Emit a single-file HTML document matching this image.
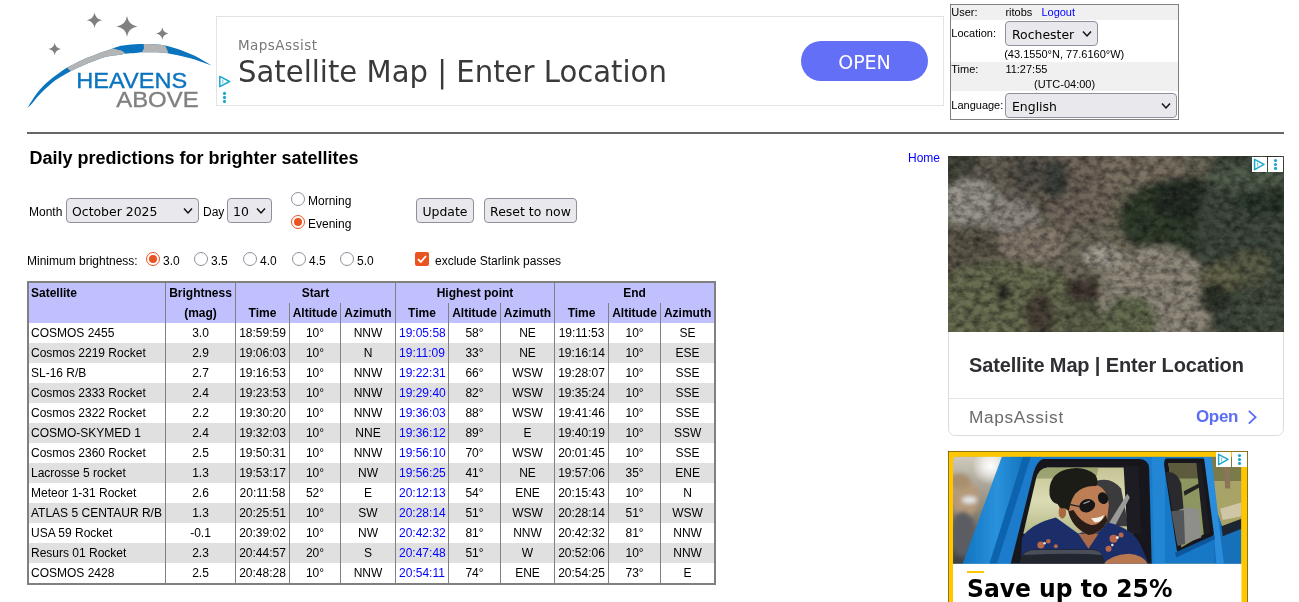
<!DOCTYPE html>
<html><head><meta charset="utf-8"><title>Heavens-Above</title>
<style>
html,body{margin:0;padding:0;background:#fff;}
body{width:1299px;height:602px;overflow:hidden;position:relative;font-family:"Liberation Sans",Arial,sans-serif;font-size:12px;color:#000;}
.abs{position:absolute;}
a{color:#0000ff;text-decoration:none;}
.dv{font-family:"DejaVu Sans","Liberation Sans",sans-serif;}
/* fake select / button */
.sel{position:absolute;box-sizing:border-box;border:1px solid #8f8f9d;border-radius:4px;background:#e9e9ed;font-family:"DejaVu Sans",sans-serif;font-size:12.45px;color:#000;padding:0 0 0 5px;overflow:hidden;white-space:nowrap;}
.sel svg{position:absolute;right:5px;top:50%;margin-top:-4px;}
.btn{position:absolute;box-sizing:border-box;border:1px solid #8f8f9d;border-radius:4px;background:#e9e9ed;font-family:"DejaVu Sans",sans-serif;font-size:12.45px;color:#000;text-align:center;}
.radio{position:absolute;box-sizing:border-box;width:14px;height:14px;border:1px solid #8f8f9d;border-radius:50%;background:#fff;}
.radio.on{border:1px solid #e95420;background:#fff;}
.radio.on:after{content:"";position:absolute;left:2px;top:2px;width:8px;height:8px;border-radius:50%;background:#e95420;}
/* user box */
#ub{left:950px;top:4px;width:227px;height:114px;border:1px solid #808080;font-size:11px;}
#ub .row{position:absolute;left:0;width:227px;}
/* table */
table.st{position:absolute;left:27px;top:281px;border:2px solid #808080;border-collapse:separate;border-spacing:0;font-size:12px;table-layout:fixed;width:689px;}
table.st td,table.st th{height:20px;padding:0 3px;box-sizing:border-box;text-align:center;white-space:nowrap;overflow:hidden;border-left:1px solid #808080;line-height:20px;}
table.st thead{background:#c0c0ff;}
table.st th{font-weight:bold;padding:0 1px;}
table.st th.l,table.st td.l{padding-left:2px;}
table.st .l{text-align:left;}
table.st .nb,table.st td:first-child{border-left:none;}
tr.dr{background:#e0e0e0;}
#wrap{position:absolute;left:0;top:0;width:1299px;height:602px;will-change:transform;}
</style></head><body><div id="wrap">

<!-- logo -->
<svg class="abs" style="left:20px;top:5px" width="200" height="112" viewBox="20 5 200 112">
 <defs><clipPath id="arcclip"><path d="M27.5 107.9C29.1 105.2 30.6 102.6 32.5 99.8C34.3 97.0 36.6 93.7 38.7 91.1C40.8 88.5 42.8 86.2 44.9 84.2C47.0 82.2 49.1 80.6 51.1 79.0C53.2 77.3 54.7 76.1 57.4 74.2C60.1 72.4 63.2 70.0 67.3 67.6C71.5 65.3 77.7 62.0 82.3 59.9C86.8 57.8 90.6 56.5 94.7 54.9C98.9 53.4 103.2 52.0 107.2 50.6C111.1 49.2 115.2 47.4 118.5 46.5C121.8 45.6 124.1 45.5 126.9 45.1C129.8 44.7 132.6 44.4 135.4 44.2C138.2 44.0 141.0 44.0 143.9 44.0C146.7 44.0 149.5 44.1 152.3 44.2C155.2 44.4 158.0 44.4 160.8 44.8C163.6 45.2 166.4 45.8 169.3 46.5C172.1 47.2 174.9 48.1 177.7 49.1C180.6 50.0 183.4 51.1 186.2 52.2C189.0 53.3 191.9 54.4 194.7 55.8C197.5 57.2 200.3 58.9 203.1 60.5C206.0 62.1 208.8 63.9 211.6 65.6C208.8 64.6 206.0 63.6 203.1 62.6C200.3 61.6 197.5 60.5 194.7 59.6C191.9 58.7 189.0 58.0 186.2 57.3C183.4 56.5 180.8 55.9 177.7 55.2C174.6 54.6 170.4 53.8 167.6 53.3C164.8 52.8 163.3 52.6 160.8 52.4C158.3 52.3 155.2 52.2 152.3 52.2C149.5 52.1 146.7 52.1 143.9 52.2C141.0 52.3 138.5 52.6 135.4 52.9C132.3 53.1 128.1 53.4 125.2 53.8C122.4 54.2 121.5 54.7 118.5 55.1C115.5 55.6 111.1 55.6 107.2 56.6C103.2 57.5 98.9 59.2 94.7 60.7C90.6 62.2 86.4 63.8 82.3 65.7C78.1 67.5 74.0 69.5 69.8 71.8C65.7 74.0 60.5 77.0 57.4 79.0C54.2 81.0 53.2 82.0 51.1 83.7C49.1 85.4 47.0 87.2 44.9 89.2C42.8 91.1 40.8 93.1 38.7 95.4C36.6 97.7 34.3 100.8 32.5 102.9C30.6 105.0 29.1 106.2 27.5 107.9Z"/></clipPath></defs>
 <path d="M94.5 12.5Q95.5 19.2 102.2 20.2Q95.5 21.2 94.5 27.9Q93.5 21.2 86.8 20.2Q93.5 19.2 94.5 12.5ZM127.0 16.0Q128.4 25.0 137.4 26.4Q128.4 27.7 127.0 36.8Q125.7 27.7 116.6 26.4Q125.7 25.0 127.0 16.0ZM162.3 27.2Q163.1 32.7 168.6 33.5Q163.1 34.3 162.3 39.8Q161.5 34.3 156.0 33.5Q161.5 32.7 162.3 27.2ZM54.7 42.7Q55.5 48.2 61.0 49.0Q55.5 49.8 54.7 55.3Q53.9 49.8 48.4 49.0Q53.9 48.2 54.7 42.7Z" fill="#808080"/>
 <path d="M27.5 107.9C29.1 105.2 30.6 102.6 32.5 99.8C34.3 97.0 36.6 93.7 38.7 91.1C40.8 88.5 42.8 86.2 44.9 84.2C47.0 82.2 49.1 80.6 51.1 79.0C53.2 77.3 54.7 76.1 57.4 74.2C60.1 72.4 63.2 70.0 67.3 67.6C71.5 65.3 77.7 62.0 82.3 59.9C86.8 57.8 90.6 56.5 94.7 54.9C98.9 53.4 103.2 52.0 107.2 50.6C111.1 49.2 115.2 47.4 118.5 46.5C121.8 45.6 124.1 45.5 126.9 45.1C129.8 44.7 132.6 44.4 135.4 44.2C138.2 44.0 141.0 44.0 143.9 44.0C146.7 44.0 149.5 44.1 152.3 44.2C155.2 44.4 158.0 44.4 160.8 44.8C163.6 45.2 166.4 45.8 169.3 46.5C172.1 47.2 174.9 48.1 177.7 49.1C180.6 50.0 183.4 51.1 186.2 52.2C189.0 53.3 191.9 54.4 194.7 55.8C197.5 57.2 200.3 58.9 203.1 60.5C206.0 62.1 208.8 63.9 211.6 65.6C208.8 64.6 206.0 63.6 203.1 62.6C200.3 61.6 197.5 60.5 194.7 59.6C191.9 58.7 189.0 58.0 186.2 57.3C183.4 56.5 180.8 55.9 177.7 55.2C174.6 54.6 170.4 53.8 167.6 53.3C164.8 52.8 163.3 52.6 160.8 52.4C158.3 52.3 155.2 52.2 152.3 52.2C149.5 52.1 146.7 52.1 143.9 52.2C141.0 52.3 138.5 52.6 135.4 52.9C132.3 53.1 128.1 53.4 125.2 53.8C122.4 54.2 121.5 54.7 118.5 55.1C115.5 55.6 111.1 55.6 107.2 56.6C103.2 57.5 98.9 59.2 94.7 60.7C90.6 62.2 86.4 63.8 82.3 65.7C78.1 67.5 74.0 69.5 69.8 71.8C65.7 74.0 60.5 77.0 57.4 79.0C54.2 81.0 53.2 82.0 51.1 83.7C49.1 85.4 47.0 87.2 44.9 89.2C42.8 91.1 40.8 93.1 38.7 95.4C36.6 97.7 34.3 100.8 32.5 102.9C30.6 105.0 29.1 106.2 27.5 107.9Z" fill="#0b74bf"/>
 <g clip-path="url(#arcclip)" fill="#b4b4b4"><path d="M66.3 66.8L71.3 72.1L74.8 81.1L101.5 69.0L125.7 54.1L124.0 52.2L121.4 50.5L117.6 49.7L111.7 48.0L110.0 46.9L82.3 54.9Z"/><path d="M143.5 42.7L144.0 48.2L141.2 53.7L168.4 54.6L167.6 50.7L164.4 44.0Z"/></g>
 <text x="76.3" y="88" font-family="'Liberation Sans',sans-serif" font-size="22.3" fill="#0b74bf" stroke="#0b74bf" stroke-width="0.35" textLength="111" lengthAdjust="spacingAndGlyphs">HEAVENS</text>
 <text x="116.2" y="107" font-family="'Liberation Sans',sans-serif" font-size="22.3" fill="#808080" stroke="#808080" stroke-width="0.35" textLength="82.5" lengthAdjust="spacingAndGlyphs">ABOVE</text>
</svg>

<!-- top banner ad -->
<div class="abs" style="left:216px;top:16px;width:726px;height:88px;border:1px solid #e3e3e3;background:#fff;"></div>
<div class="abs dv" style="left:238px;top:35.5px;font-size:13.5px;letter-spacing:0.45px;color:#777;line-height:18px;">MapsAssist</div>
<div class="abs dv" style="left:238px;top:51px;font-size:30px;color:#3a3a3a;line-height:42px;white-space:nowrap;transform:scaleX(0.9707);transform-origin:0 0;">Satellite Map | Enter Location</div>
<div class="abs dv" style="left:801px;top:41px;width:127px;height:40px;border-radius:20px;background:#636ff7;color:#fff;font-size:19px;line-height:43px;text-align:center;">OPEN</div>

<svg class="abs" style="left:217px;top:73px" width="16" height="32" viewBox="217 73 16 32"><path d="M219.8 76.4 L229.6 81.5 L219.8 86.7 Z" fill="none" stroke="#1ba8cc" stroke-width="1.5" stroke-linejoin="round"/><path d="M222.8 79.6 V83.6" stroke="#1ba8cc" stroke-width="1.2" opacity="0.55"/><g fill="#1ba8cc"><circle cx="224.5" cy="93.4" r="1.6"/><circle cx="224.5" cy="97.4" r="1.6"/><circle cx="224.5" cy="101.4" r="1.6"/></g></svg>
<!-- user box -->
<div id="ub" class="abs">
 <div class="row" style="top:0;height:15px;background:#f0f0f0;"></div>
 <div class="row" style="top:57px;height:29px;background:#f0f0f0;"></div>
 <span class="abs" style="left:0.3px;top:1px;">User:</span>
 <span class="abs" style="left:54.4px;top:1px;">ritobs</span>
 <a class="abs" style="left:90.4px;top:1px;">Logout</a>
 <span class="abs" style="left:0.3px;top:22px;">Location:</span>
 <span class="abs" style="left:53.2px;top:43px;white-space:nowrap;">(43.1550°N, 77.6160°W)</span>
 <span class="abs" style="left:0.3px;top:58px;">Time:</span>
 <span class="abs" style="left:54.4px;top:58px;">11:27:55</span>
 <span class="abs" style="left:83px;top:73px;white-space:nowrap;">(UTC-04:00)</span>
 <span class="abs" style="left:0.3px;top:94px;">Language:</span>
</div>
<div class="sel" style="left:1005px;top:21px;width:93px;height:25px;line-height:26px;padding-left:6px;">Rochester<svg width="10" height="8" viewBox="0 0 10 8"><path d="M1 1.6 L5 5.9 L9 1.6" fill="none" stroke="#111" stroke-width="1.5"/></svg></div>
<div class="sel" style="left:1005px;top:93px;width:172px;height:25px;line-height:26px;padding-left:6px;">English<svg width="10" height="8" viewBox="0 0 10 8"><path d="M1 1.6 L5 5.9 L9 1.6" fill="none" stroke="#111" stroke-width="1.5"/></svg></div>

<!-- hr -->
<div class="abs" style="left:27px;top:132px;width:1257px;height:2px;background:#666;"></div>

<!-- heading -->
<div class="abs" style="left:29.4px;top:147px;font-size:18px;font-weight:bold;line-height:22px;white-space:nowrap;">Daily predictions for brighter satellites</div>
<a class="abs" style="left:908px;top:151px;font-size:12px;line-height:14px;">Home</a>

<!-- form -->
<span class="abs" style="left:29px;top:205px;line-height:14px;">Month</span>
<div class="sel" style="left:66px;top:198px;width:133px;height:25px;line-height:26px;">October 2025<svg width="10" height="8" viewBox="0 0 10 8"><path d="M1 1.6 L5 5.9 L9 1.6" fill="none" stroke="#111" stroke-width="1.5"/></svg></div>
<span class="abs" style="left:203px;top:205px;line-height:14px;">Day</span>
<div class="sel" style="left:227px;top:198px;width:45px;height:25px;line-height:26px;">10<svg width="10" height="8" viewBox="0 0 10 8"><path d="M1 1.6 L5 5.9 L9 1.6" fill="none" stroke="#111" stroke-width="1.5"/></svg></div>
<div class="radio" style="left:291px;top:192px;"></div>
<span class="abs" style="left:308px;top:194px;line-height:14px;">Morning</span>
<div class="radio on" style="left:291px;top:215px;"></div>
<span class="abs" style="left:308px;top:217px;line-height:14px;">Evening</span>
<div class="btn" style="left:416px;top:198px;width:58px;height:25px;line-height:26px;">Update</div>
<div class="btn" style="left:484px;top:198px;width:93px;height:25px;line-height:26px;">Reset to now</div>

<span class="abs" style="left:27px;top:254px;line-height:14px;white-space:nowrap;">Minimum brightness:</span>
<div class="radio on" style="left:146px;top:252px;"></div><span class="abs" style="left:163px;top:254px;line-height:14px;">3.0</span>
<div class="radio" style="left:194px;top:252px;"></div><span class="abs" style="left:211px;top:254px;line-height:14px;">3.5</span>
<div class="radio" style="left:243px;top:252px;"></div><span class="abs" style="left:260px;top:254px;line-height:14px;">4.0</span>
<div class="radio" style="left:292px;top:252px;"></div><span class="abs" style="left:309px;top:254px;line-height:14px;">4.5</span>
<div class="radio" style="left:340px;top:252px;"></div><span class="abs" style="left:357px;top:254px;line-height:14px;">5.0</span>
<div class="abs" style="left:415px;top:252px;width:14px;height:14px;border-radius:2px;background:#e95420;"><svg width="14" height="14" viewBox="0 0 14 14" style="display:block"><path d="M3 7.2 L5.8 10 L11 4" fill="none" stroke="#fff" stroke-width="1.8"/></svg></div>
<span class="abs" style="left:435px;top:254px;line-height:14px;white-space:nowrap;">exclude Starlink passes</span>

<!-- table -->
<table class="st">
<colgroup><col style="width:136px"><col style="width:70px"><col style="width:54px"><col style="width:51px"><col style="width:55px"><col style="width:53px"><col style="width:52px"><col style="width:54px"><col style="width:54px"><col style="width:52px"><col style="width:54px"></colgroup>
<thead>
<tr><th class="l nb">Satellite</th><th>Brightness</th><th colspan="3">Start</th><th colspan="3">Highest point</th><th colspan="3">End</th></tr>
<tr><th class="nb"></th><th>(mag)</th><th>Time</th><th>Altitude</th><th>Azimuth</th><th>Time</th><th>Altitude</th><th>Azimuth</th><th>Time</th><th>Altitude</th><th>Azimuth</th></tr>
</thead>
<tbody>
<tr class="lr"><td class="l">COSMOS 2455</td><td>3.0</td><td>18:59:59</td><td>10°</td><td>NNW</td><td><a>19:05:58</a></td><td>58°</td><td>NE</td><td>19:11:53</td><td>10°</td><td>SE</td></tr>
<tr class="dr"><td class="l">Cosmos 2219 Rocket</td><td>2.9</td><td>19:06:03</td><td>10°</td><td>N</td><td><a>19:11:09</a></td><td>33°</td><td>NE</td><td>19:16:14</td><td>10°</td><td>ESE</td></tr>
<tr class="lr"><td class="l">SL-16 R/B</td><td>2.7</td><td>19:16:53</td><td>10°</td><td>NNW</td><td><a>19:22:31</a></td><td>66°</td><td>WSW</td><td>19:28:07</td><td>10°</td><td>SSE</td></tr>
<tr class="dr"><td class="l">Cosmos 2333 Rocket</td><td>2.4</td><td>19:23:53</td><td>10°</td><td>NNW</td><td><a>19:29:40</a></td><td>82°</td><td>WSW</td><td>19:35:24</td><td>10°</td><td>SSE</td></tr>
<tr class="lr"><td class="l">Cosmos 2322 Rocket</td><td>2.2</td><td>19:30:20</td><td>10°</td><td>NNW</td><td><a>19:36:03</a></td><td>88°</td><td>WSW</td><td>19:41:46</td><td>10°</td><td>SSE</td></tr>
<tr class="dr"><td class="l">COSMO-SKYMED 1</td><td>2.4</td><td>19:32:03</td><td>10°</td><td>NNE</td><td><a>19:36:12</a></td><td>89°</td><td>E</td><td>19:40:19</td><td>10°</td><td>SSW</td></tr>
<tr class="lr"><td class="l">Cosmos 2360 Rocket</td><td>2.5</td><td>19:50:31</td><td>10°</td><td>NNW</td><td><a>19:56:10</a></td><td>70°</td><td>WSW</td><td>20:01:45</td><td>10°</td><td>SSE</td></tr>
<tr class="dr"><td class="l">Lacrosse 5 rocket</td><td>1.3</td><td>19:53:17</td><td>10°</td><td>NW</td><td><a>19:56:25</a></td><td>41°</td><td>NE</td><td>19:57:06</td><td>35°</td><td>ENE</td></tr>
<tr class="lr"><td class="l">Meteor 1-31 Rocket</td><td>2.6</td><td>20:11:58</td><td>52°</td><td>E</td><td><a>20:12:13</a></td><td>54°</td><td>ENE</td><td>20:15:43</td><td>10°</td><td>N</td></tr>
<tr class="dr"><td class="l">ATLAS 5 CENTAUR R/B</td><td>1.3</td><td>20:25:51</td><td>10°</td><td>SW</td><td><a>20:28:14</a></td><td>51°</td><td>WSW</td><td>20:28:14</td><td>51°</td><td>WSW</td></tr>
<tr class="lr"><td class="l">USA 59 Rocket</td><td>-0.1</td><td>20:39:02</td><td>10°</td><td>NW</td><td><a>20:42:32</a></td><td>81°</td><td>NNW</td><td>20:42:32</td><td>81°</td><td>NNW</td></tr>
<tr class="dr"><td class="l">Resurs 01 Rocket</td><td>2.3</td><td>20:44:57</td><td>20°</td><td>S</td><td><a>20:47:48</a></td><td>51°</td><td>W</td><td>20:52:06</td><td>10°</td><td>NNW</td></tr>
<tr class="lr"><td class="l">COSMOS 2428</td><td>2.5</td><td>20:48:28</td><td>10°</td><td>NNW</td><td><a>20:54:11</a></td><td>74°</td><td>ENE</td><td>20:54:25</td><td>73°</td><td>E</td></tr>
</tbody>
</table>

<!-- right ads -->
<div id="ad1" class="abs" style="left:948px;top:156px;width:336px;height:280px;">
 <div class="abs" style="left:0;top:170px;width:336px;height:110px;border:1px solid #dcdcdc;border-radius:0 0 7px 7px;box-sizing:border-box;background:#fff;"></div>
 <div class="abs" style="left:0;top:0;width:336px;height:176px;overflow:hidden;"><!-- sat --><svg class="abs" style="left:0;top:0" width="336" height="176" viewBox="0 0 336 176">
<defs>
<filter id="sb" x="-10%" y="-10%" width="120%" height="120%"><feGaussianBlur stdDeviation="3.5"/></filter>
<filter id="tx" x="0" y="0" width="100%" height="100%"><feTurbulence type="fractalNoise" baseFrequency="0.12 0.16" numOctaves="5" seed="7" result="n"/><feColorMatrix type="matrix" values="0 0 0 0 0  0 0 0 0 0  0 0 0 0 0  1.6 0 0 0 -0.55"/></filter>
<filter id="tx2" x="0" y="0" width="100%" height="100%"><feTurbulence type="fractalNoise" baseFrequency="0.18" numOctaves="4" seed="23" result="n"/><feColorMatrix type="matrix" values="0 0 0 0 1  0 0 0 0 1  0 0 0 0 0.9  1.4 0 0 0 -0.6"/></filter>
</defs>
<rect width="336" height="176" fill="#666353"/>
<g filter="url(#sb)"><ellipse cx="10.2" cy="8.8" rx="25.2" ry="23.5" fill="#45463a"/><ellipse cx="67.3" cy="26.3" rx="43.7" ry="40.4" fill="#645d52"/><ellipse cx="21.9" cy="46.8" rx="31.9" ry="23.5" fill="#98948c"/><ellipse cx="61.4" cy="62.9" rx="30.3" ry="18.5" fill="#8e8880"/><ellipse cx="137.4" cy="35.1" rx="43.7" ry="47.1" fill="#70655a"/><ellipse cx="106.7" cy="23.4" rx="15.1" ry="20.2" fill="#3e413a"/><ellipse cx="77.5" cy="17.5" rx="11.8" ry="16.8" fill="#4c4a42"/><ellipse cx="26.3" cy="99.4" rx="40.4" ry="30.3" fill="#5b5748"/><ellipse cx="89.2" cy="89.2" rx="38.7" ry="18.5" fill="#85796c"/><ellipse cx="57.0" cy="149.1" rx="75.7" ry="43.7" fill="#676c50"/><ellipse cx="54.8" cy="136.0" rx="5.9" ry="10.1" fill="#101416"/><ellipse cx="92.1" cy="159.4" rx="15.1" ry="25.2" fill="#463f35"/><ellipse cx="146.2" cy="98.0" rx="33.6" ry="31.9" fill="#6e675a"/><ellipse cx="156.4" cy="100.9" rx="21.9" ry="11.8" fill="#a19b8f"/><ellipse cx="146.2" cy="156.4" rx="33.6" ry="35.3" fill="#5a5e46"/><ellipse cx="136.0" cy="134.5" rx="18.5" ry="11.8" fill="#3f352d"/><ellipse cx="195.8" cy="14.6" rx="42.0" ry="26.9" fill="#786e60"/><ellipse cx="182.6" cy="65.8" rx="23.5" ry="35.3" fill="#6b6656"/><ellipse cx="236.7" cy="62.9" rx="65.6" ry="42.0" fill="#2f3a2c"/><ellipse cx="233.8" cy="44.6" rx="28.6" ry="19.3" fill="#202a21"/><ellipse cx="302.5" cy="89.2" rx="53.8" ry="112.6" fill="#3c473a"/><ellipse cx="298.1" cy="21.9" rx="38.7" ry="11.8" fill="#505c4c"/><ellipse cx="317.1" cy="46.8" rx="30.3" ry="13.5" fill="#2c382c"/><ellipse cx="208.9" cy="141.8" rx="57.2" ry="52.1" fill="#8f887a"/><ellipse cx="182.6" cy="165.2" rx="26.9" ry="25.2" fill="#626a4e"/><ellipse cx="273.3" cy="121.3" rx="23.5" ry="15.1" fill="#626248"/><ellipse cx="266.0" cy="141.8" rx="15.1" ry="15.1" fill="#2a3226"/><ellipse cx="302.5" cy="111.1" rx="20.2" ry="16.8" fill="#585c44"/><ellipse cx="321.5" cy="157.9" rx="31.9" ry="33.6" fill="#434b3c"/></g>
<rect width="336" height="176" filter="url(#tx)" opacity="0.6"/>
<rect width="336" height="176" filter="url(#tx2)" opacity="0.1"/>
</svg><!-- /sat --></div>
 <div class="abs" style="left:304px;top:1px;width:15px;height:15px;background:#fff;"><svg width="15" height="15" viewBox="0 0 15 15" style="display:block"><path d="M2.6 2.3 L12 7.4 L2.6 12.6 Z" fill="none" stroke="#1ba8cc" stroke-width="1.5" stroke-linejoin="round"/><path d="M5.6 5.6 V9.4" stroke="#1ba8cc" stroke-width="1.2" opacity="0.55"/></svg></div>
 <div class="abs" style="left:320px;top:1px;width:15px;height:15px;background:#fff;"><svg width="15" height="15" viewBox="0 0 15 15" style="display:block"><g fill="#1ba8cc"><circle cx="7.5" cy="3.5" r="1.6"/><circle cx="7.5" cy="7.5" r="1.6"/><circle cx="7.5" cy="11.4" r="1.6"/></g></svg></div>
 <div class="abs" style="left:21px;top:196px;font-size:20px;font-weight:bold;color:#2e2f33;white-space:nowrap;line-height:26px;letter-spacing:-0.14px;">Satellite Map | Enter Location</div>
 <div class="abs" style="left:1px;top:242px;width:334px;height:1px;background:#e3e3e3;"></div>
 <div class="abs" style="left:21px;top:250.5px;font-size:17.3px;color:#6b6b6b;line-height:20px;letter-spacing:0.65px;">MapsAssist</div>
 <div class="abs" style="left:248px;top:250.5px;font-size:17px;font-weight:bold;color:#5b6cf5;line-height:20px;letter-spacing:-0.35px;">Open</div>
 <svg class="abs" style="left:298px;top:253px" width="12" height="16" viewBox="0 0 12 16"><path d="M2.8 1.8 L9.6 8.2 L2.8 14.6" fill="none" stroke="#5b6cf5" stroke-width="1.8"/></svg>
</div>
<div id="ad2" class="abs" style="left:948px;top:451px;width:300px;height:151px;overflow:hidden;">
<!-- jeep --><svg class="abs" style="left:0;top:0" width="300" height="151" viewBox="0 0 1196 602">
<defs>
<clipPath id="jc"><path d="M20 602 V40 Q20 22 38 22 H1170 V602 Z"/></clipPath>
<linearGradient id="jblue" x1="0" y1="0" x2="1" y2="0"><stop offset="0" stop-color="#1173c0"/><stop offset="0.5" stop-color="#2a92dc"/><stop offset="1" stop-color="#0f6bb6"/></linearGradient>
<linearGradient id="jws" x1="0" y1="0" x2="0" y2="1"><stop offset="0" stop-color="#cfcabd"/><stop offset="0.5" stop-color="#8d8678"/><stop offset="1" stop-color="#3d3f42"/></linearGradient>
<linearGradient id="jbg" x1="0" y1="0" x2="0" y2="1"><stop offset="0" stop-color="#c4c496"/><stop offset="0.5" stop-color="#dcdcb4"/><stop offset="1" stop-color="#b4b888"/></linearGradient>
<radialGradient id="jsun" cx="0.5" cy="0.5" r="0.5"><stop offset="0" stop-color="#fff" stop-opacity="1"/><stop offset="0.4" stop-color="#fff" stop-opacity="0.7"/><stop offset="1" stop-color="#fff" stop-opacity="0"/></radialGradient>
<filter id="jsoft" x="0" y="0" width="100%" height="100%"><feGaussianBlur stdDeviation="2.2"/></filter>
<filter id="jb" x="-5%" y="-5%" width="110%" height="110%"><feGaussianBlur stdDeviation="3"/></filter>
<filter id="jb2" x="-20%" y="-20%" width="140%" height="140%"><feGaussianBlur stdDeviation="8"/></filter>
</defs>
<rect width="1196" height="602" fill="#ffc700"/>
<g clip-path="url(#jc)"><g filter="url(#jsoft)">
 <rect x="20" y="22" width="1150" height="428" fill="#1878c6"/>
 <!-- windshield / left -->
 <path d="M20 22 H225 L65 450 H20Z" fill="url(#jws)"/>
 <g filter="url(#jb2)"><ellipse cx="70" cy="190" rx="55" ry="70" fill="#b59a7a"/><ellipse cx="85" cy="195" rx="30" ry="14" fill="#e6e8ea"/><ellipse cx="60" cy="330" rx="50" ry="90" fill="#5b5d62"/><ellipse cx="45" cy="120" rx="45" ry="30" fill="#a88f6e"/></g>
 <circle cx="170" cy="60" r="75" fill="url(#jsun)"/>
 <!-- A pillar -->
 <path d="M215 22 H335 L200 450 H58Z" fill="url(#jblue)"/>
 <path d="M300 22 H335 L200 450 H165Z" fill="#0f63ad"/>
 <path d="M330 22 H860 V450 H195Z" fill="#1a7ccb"/>
 <!-- door window frame -->
 <path d="M380 32 H765 Q800 34 802 70 L812 450 H250 L335 110 Q350 40 380 32Z" fill="#15181c"/>
 <!-- window background -->
 <path d="M395 66 H735 L740 330 H300 L350 115 Q360 70 395 66Z" fill="url(#jbg)"/>
 <path d="M395 66 H600 L590 110 H352 Q362 70 395 66Z" fill="#7d8a55" opacity="0.6"/>
 <!-- seat -->
 <path d="M590 120 Q650 100 690 150 L720 300 H600Z" fill="#3a3b3d"/>
 <path d="M700 60 H760 L770 330 H715Z" fill="#1b1d20"/>
 <path d="M640 290 L715 170 L725 185 L665 300Z" fill="#9a9a98"/>
 <!-- shirt -->
 <path d="M295 345 Q330 290 430 265 L520 330 L640 285 Q740 310 770 380 L800 450 H290Z" fill="#1f2f6b"/>
 <g fill="#b8664a"><circle cx="370" cy="375" r="14"/><circle cx="400" cy="360" r="9"/><circle cx="660" cy="350" r="16"/><circle cx="690" cy="335" r="10"/><circle cx="640" cy="390" r="12"/><circle cx="430" cy="380" r="8"/></g>
 <g fill="#e9e2d8"><circle cx="385" cy="368" r="5"/><circle cx="675" cy="345" r="6"/><circle cx="655" cy="375" r="5"/></g>
 <!-- neck/face -->
 <ellipse cx="456" cy="243" rx="15" ry="26" fill="#a8693f"/><path d="M478 240 Q483 175 510 158 Q545 132 592 136 Q636 150 641 215 L633 285 Q600 338 560 335 Q505 315 478 240Z" fill="#bd7d55"/>
 <path d="M520 330 L560 390 L600 330Z" fill="#a96a45"/>
 <!-- hair -->
 <path d="M405 175 Q398 95 470 74 Q540 55 587 95 Q602 120 592 140 Q540 135 507 170 Q487 200 482 240 L466 228 Q445 232 438 212 Q410 205 405 175Z" fill="#1d1a18"/>
 <!-- beard -->
 <path d="M480 240 Q490 300 560 335 Q610 330 635 280 L630 255 Q600 300 570 295 Q530 285 500 235Z" fill="#2a1d17"/>
 <path d="M570 268 Q600 268 622 255 Q615 285 585 285Z" fill="#f4f0ea"/>
 <!-- sunglasses -->
 <ellipse cx="555" cy="218" rx="32" ry="26" fill="#121416" transform="rotate(-20 555 218)"/>
 <ellipse cx="618" cy="188" rx="20" ry="24" fill="#121416" transform="rotate(-20 618 188)"/>
 <path d="M480 212 L525 222" stroke="#222" stroke-width="5"/>
 <path d="M540 210 L565 200" stroke="#cfd6dc" stroke-width="5" opacity="0.7"/>
 <!-- arm -->
 <path d="M620 450 Q650 415 720 410 Q780 415 795 450Z" fill="#b87850"/>
 <!-- mirror -->
 <path d="M285 450 Q290 400 340 392 H580 Q620 395 625 450Z" fill="#23262d"/>
 <path d="M300 415 Q310 398 345 395 H575 Q605 397 615 415 Q500 405 300 415Z" fill="#4a4f5a"/>
 <!-- B pillar highlight -->
 <path d="M812 22 H865 V450 H822Z" fill="#2086d4"/>
 <!-- rear window -->
 <path d="M870 30 H1015 Q1035 32 1038 60 L1062 320 Q1062 340 1040 350 L935 410 Q915 415 912 395 L862 60 Q860 32 870 30Z" fill="#14171a"/>
 <path d="M878 48 H1005 L1040 320 L930 385 Z" fill="#8d9660"/>
 <path d="M878 48 H1005 L1012 110 H888Z" fill="#5d5a3c"/>
 <path d="M868 85 Q910 75 930 130 L940 240 H895Z" fill="#2b2c2e"/>
 <path d="M920 235 Q960 215 1000 235 L1010 345 L940 370Z" fill="#8e8e8a"/>
 <path d="M890 240 L940 235 L945 370 L915 380Z" fill="#55565a"/>
 <path d="M990 48 H1010 L1045 325 L1020 335Z" fill="#1c1e20"/>
 <path d="M940 160 L1000 130 L1003 145 L943 178Z" fill="#222"/>
 <!-- right background -->
 <path d="M1040 22 H1170 V300 L1100 320 L1075 250Z" fill="#a8a468"/>
 <path d="M1040 22 H1170 V120 H1050Z" fill="#7a7a4c"/>
 <path d="M1100 60 H1125 V150 H1105Z" fill="#8a7458"/>
 <path d="M1085 230 L1170 205 V260 L1095 275Z" fill="#cfc6a8"/>
 <path d="M1075 250 L1100 320 L1170 300 V450 H1060 L1062 320Z" fill="#176fba"/>
 <path d="M1090 300 L1170 270 V310 L1095 340Z" fill="#1d2730"/>
 <path d="M1020 22 H1050 L1085 330 L1100 450 H1070 L1060 330Z" fill="#2a8cda"/>
 <path d="M905 405 L1062 335 L1064 352 L910 425Z" fill="#0d579c"/>
</g></g>
<rect x="20" y="450" width="1150" height="160" fill="#fff"/>
<rect x="0.5" y="0.5" width="1195" height="620" fill="none" stroke="#4a4326" stroke-width="4"/>
</svg><!-- /jeep -->
 <div class="abs" style="left:268px;top:1px;width:15px;height:15px;background:#fff;"><svg width="15" height="15" viewBox="0 0 15 15" style="display:block"><path d="M2.6 2.3 L12 7.4 L2.6 12.6 Z" fill="none" stroke="#1ba8cc" stroke-width="1.5" stroke-linejoin="round"/><path d="M5.6 5.6 V9.4" stroke="#1ba8cc" stroke-width="1.2" opacity="0.55"/></svg></div>
 <div class="abs" style="left:284px;top:1px;width:15px;height:15px;background:#fff;"><svg width="15" height="15" viewBox="0 0 15 15" style="display:block"><g fill="#1ba8cc"><circle cx="7.5" cy="3.5" r="1.6"/><circle cx="7.5" cy="7.5" r="1.6"/><circle cx="7.5" cy="11.4" r="1.6"/></g></svg></div>
 <div class="abs" style="left:19px;top:120px;width:17px;height:2px;background:#ffc700;"></div>
 <div class="abs dv" style="left:18.5px;top:119.5px;font-size:25.5px;font-weight:bold;color:#000;white-space:nowrap;line-height:34px;transform-origin:0 0;transform:scaleX(0.92);">Save up to 25%</div>
</div>
</body></html>
